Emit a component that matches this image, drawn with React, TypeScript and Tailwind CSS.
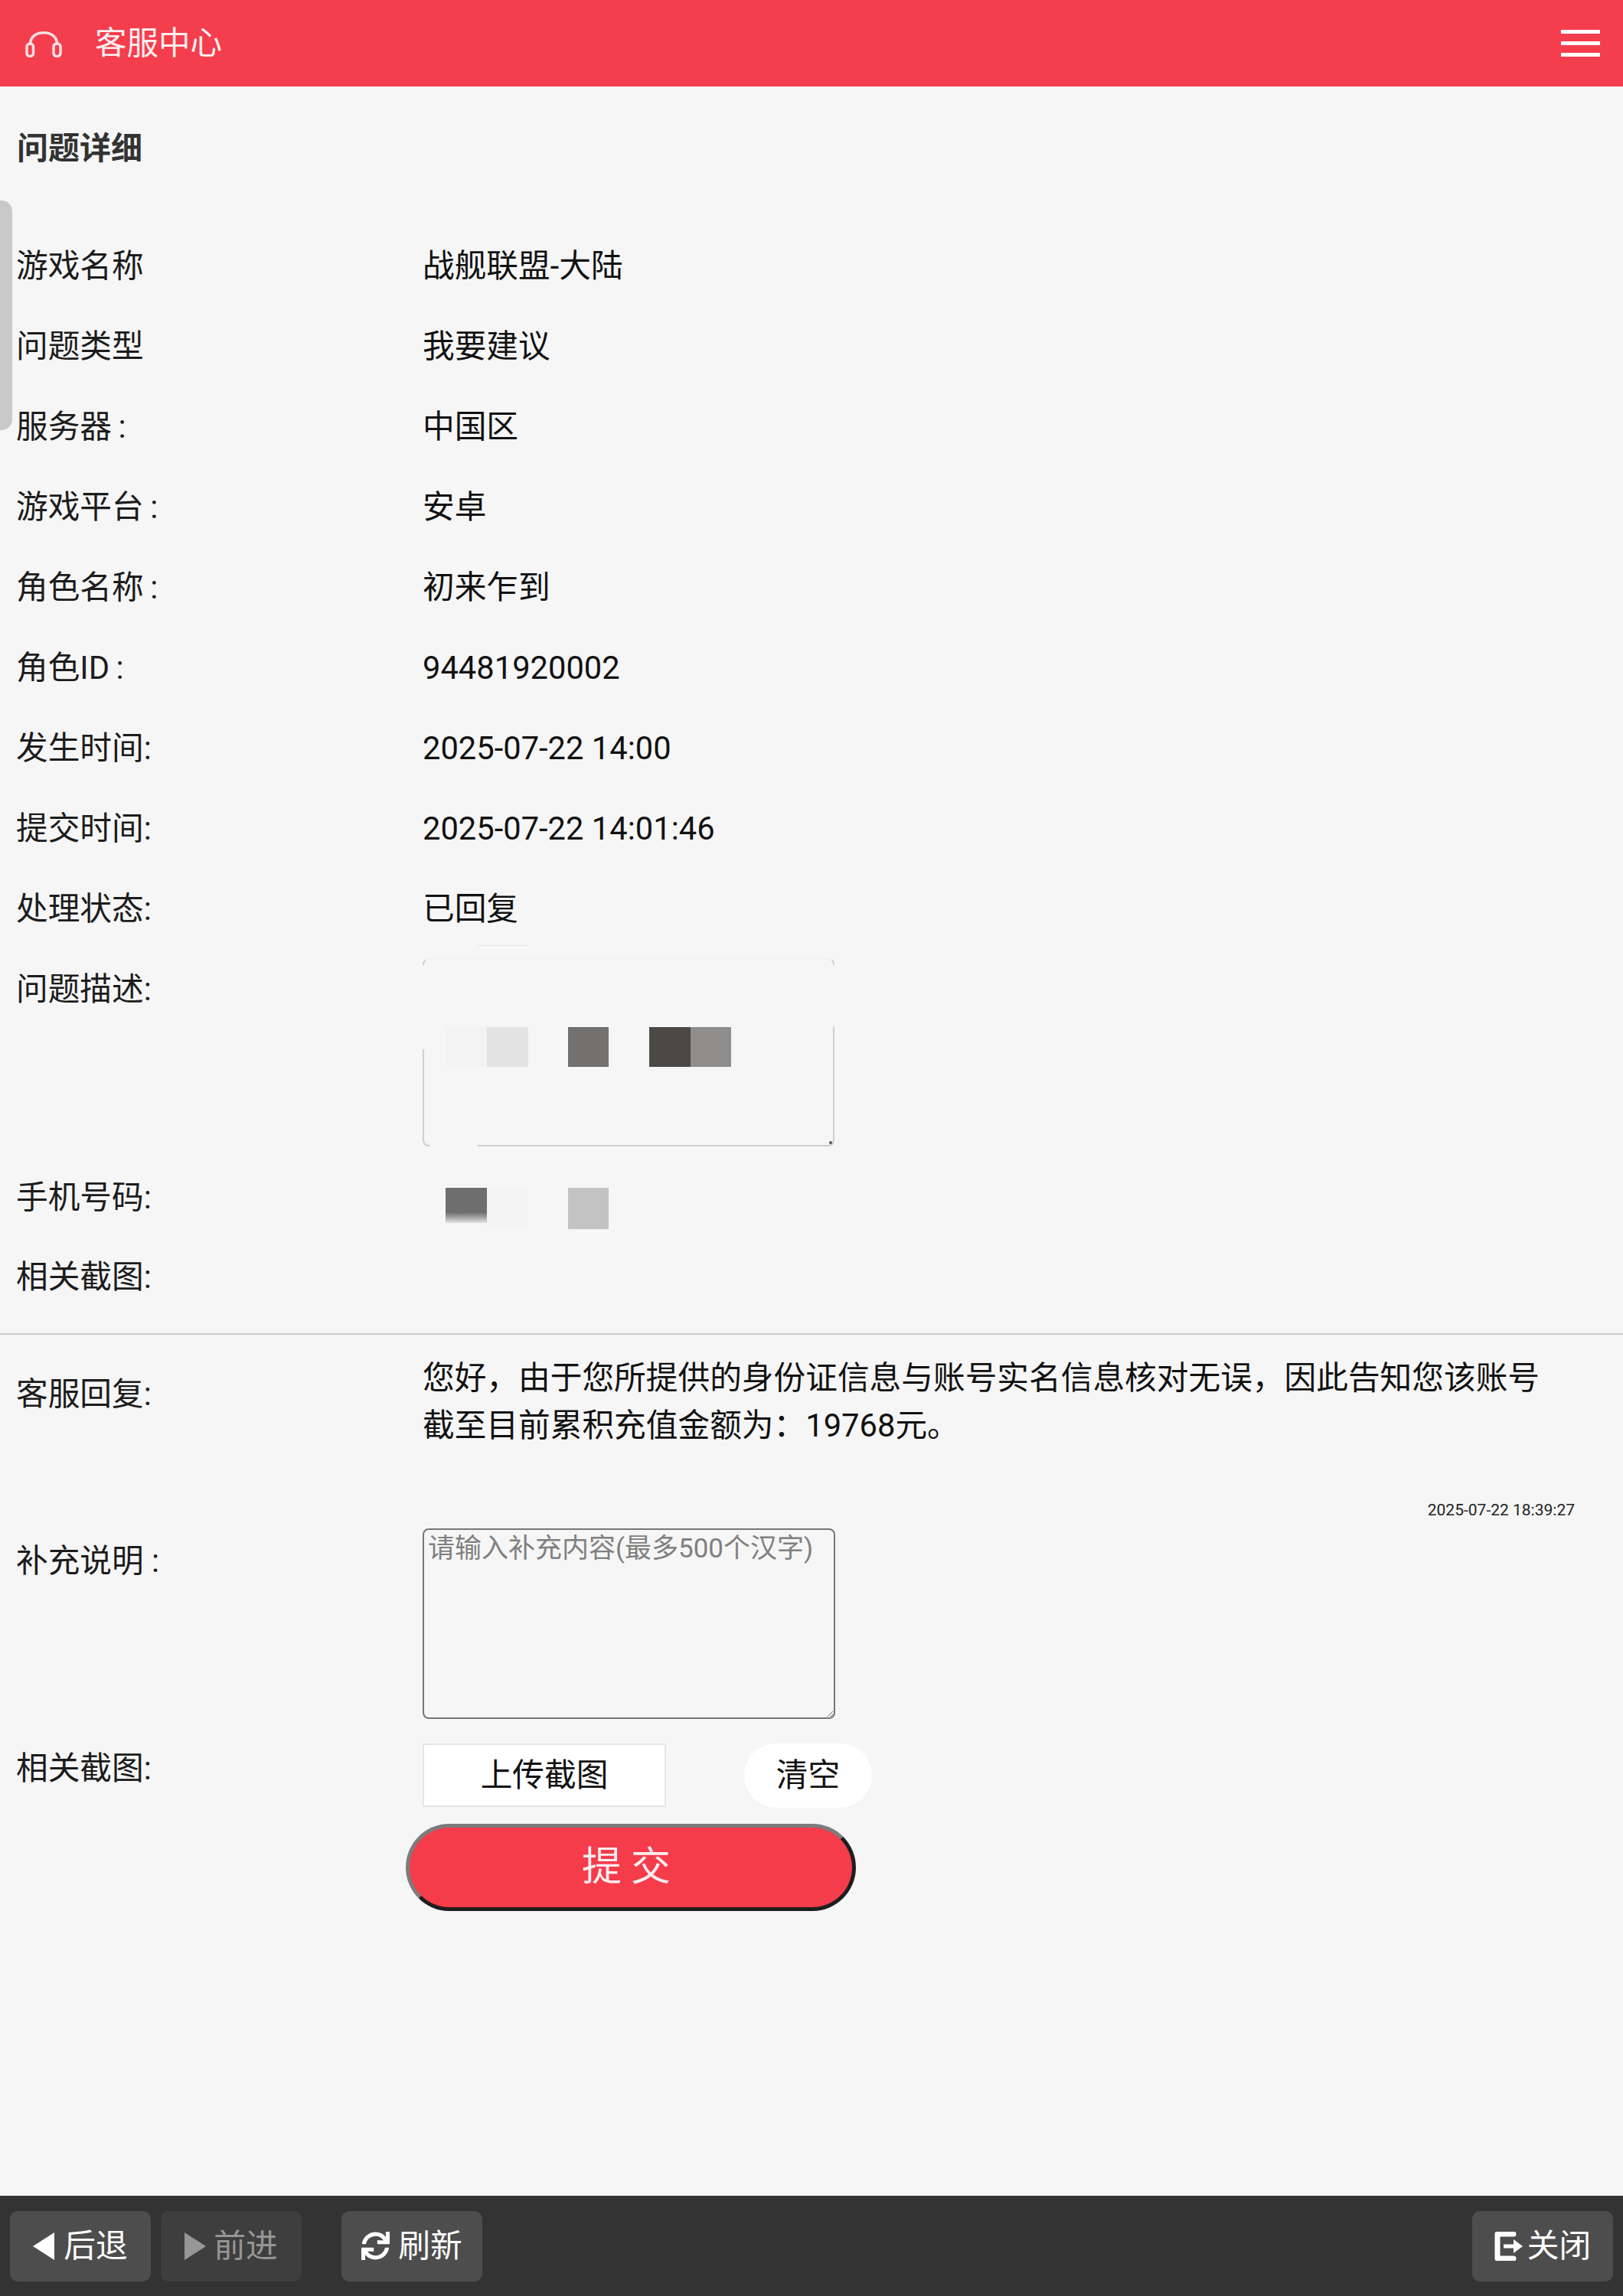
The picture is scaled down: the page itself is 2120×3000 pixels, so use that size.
import { FaSync } from "react-icons/fa";

const rows: [string, string][] = [
  ["游戏名称", "战舰联盟-大陆"],
  ["问题类型", "我要建议"],
  ["服务器\u2009:", "中国区"],
  ["游戏平台\u2009:", "安卓"],
  ["角色名称\u2009:", "初来乍到"],
  ["角色ID\u2009:", "94481920002"],
  ["发生时间:", "2025-07-22 14:00"],
  ["提交时间:", "2025-07-22 14:01:46"],
  ["处理状态:", "已回复"],
];

function Label({ children }: { children: string }) {
  return <div className="pl-[21px] text-[#1c1c1c]">{children}</div>;
}

function Toolbtn({ children, dim }: { children: React.ReactNode; dim?: boolean }) {
  return (
    <div
      className={`flex h-[92px] w-[184px] items-center justify-center rounded-[10px] text-[41.700px] ${
        dim ? "bg-[#3e3e3e] text-[#969696]" : "bg-[#4d4d4d] text-white"
      }`}
    >
      {children}
    </div>
  );
}

export default function App() {
  return (
    <div
      className="relative flex h-[3000px] w-[2120px] flex-col bg-[#f6f6f6] text-[41.700px] leading-none"
      style={{ fontFamily: 'Roboto, "Noto Sans CJK SC", sans-serif' }}
    >
      <header className="flex h-[113px] shrink-0 items-center justify-between bg-[#f43e4d] pl-[33px] pr-[30px] text-white">
        <div className="flex items-center">
          <svg width="48" height="34" viewBox="0 0 48 34" fill="none" stroke="#fbdfe1" strokeWidth="3.500" className="mt-[2px]">
            <path d="M6.500 18 V17 C6.500 7 14 1.800 24 1.800 C34 1.800 41.500 7 41.500 17 V18" />
            <rect x="2" y="16" width="8.500" height="16.500" rx="4" />
            <rect x="37" y="16" width="9" height="16.500" rx="4" />
          </svg>
          <span className="ml-[43px] text-[41.500px] text-[#fdeef0]">客服中心</span>
        </div>
        <div className="flex w-[51px] flex-col gap-[10px]">
          <div className="h-[5px] bg-white" />
          <div className="h-[5px] bg-white" />
          <div className="h-[5px] bg-white" />
        </div>
      </header>

      <div className="absolute left-0 top-[262px] h-[300px] w-[16px] rounded-r-[14px] bg-[#c9c9c9]" />

      <h1 className="h-[181px] pl-[22px] pt-[60px] text-[41px] font-bold leading-[42px] text-[#333333]">问题详细</h1>

      <div className="grid grid-cols-[552px_1fr]">
        {rows.map(([k, v]) => (
          <div key={k} className="col-span-2 grid h-[105px] grid-cols-[552px_1fr] items-center pt-[2px]">
            <Label>{k}</Label>
            <div className="text-[#111111]">{v}</div>
          </div>
        ))}

        <div className="col-span-2 grid h-[272px] grid-cols-[552px_1fr]">
          <div className="pt-[33px]">
            <Label>问题描述:</Label>
          </div>
          <div className="pt-[13px]">
            <div className="relative h-[246px] w-[538px] rounded-[8px] border-x-2 border-b-2 border-t border-x-[#cfcfcf] border-b-[#cfcfcf] border-t-[#efefef] pt-[89px]">
              <div className="absolute -top-[18px] left-[70px] h-[1px] w-[66px] bg-[#e6e6e6]" />
              <div className="absolute -left-[2px] top-[8px] h-[110px] w-[3px] bg-[#f6f6f6]" />
              <div className="absolute -right-[2px] top-[8px] h-[80px] w-[3px] bg-[#f6f6f6]" />
              <div className="absolute -bottom-[2px] left-[8px] h-[3px] w-[62px] bg-[#f6f6f6]" />
              <div className="absolute bottom-[1px] right-[1px] h-[4px] w-[4px] rounded-full bg-[#555555]" />
              <div className="flex pl-[28px]">
                <div className="h-[52px] w-[54px] bg-[#f3f3f3]" />
                <div className="h-[52px] w-[54px] bg-[#e3e3e3]" />
                <div className="ml-[52px] h-[52px] w-[53px] bg-[#72716f]" />
                <div className="ml-[53px] h-[52px] w-[54px] bg-[#4b4846]" />
                <div className="h-[52px] w-[53px] bg-[#8e8d8b]" />
              </div>
            </div>
          </div>
        </div>

        <div className="col-span-2 grid h-[104px] grid-cols-[552px_1fr]">
          <div className="pt-[33px]">
            <Label>手机号码:</Label>
          </div>
          <div className="flex pl-[30px] pt-[41px]">
            <div className="h-[46px] w-[54px] bg-gradient-to-b from-[#6e6e6e] from-70% to-[#e4e4e4]" />
            <div className="h-[52px] w-[54px] bg-[#f3f3f3]" />
            <div className="ml-[52px] h-[54px] w-[53px] bg-[#c3c3c3]" />
          </div>
        </div>

        <div className="col-span-2 flex h-[105px] items-center pt-[2px]">
          <Label>相关截图:</Label>
        </div>
      </div>

      <div className="mt-[22px] h-[2px] bg-[#cccccc]" />

      <div className="grid grid-cols-[552px_1fr]">
        <div className="pt-[57px]">
          <Label>客服回复:</Label>
        </div>
        <div className="w-[1480px] pt-[26px] leading-[62px] text-[#111111]">
          您好，由于您所提供的身份证信息与账号实名信息核对无误，因此告知您该账号截至目前累积充值金额为：19768元。
        </div>
      </div>

      <div className="mt-[67px] pr-[63px] text-right text-[21px] leading-[24px] text-[#222222]">2025-07-22 18:39:27</div>

      <div className="mt-[12px] grid grid-cols-[552px_1fr]">
        <div className="pt-[22px]">
          <Label>补充说明 :</Label>
        </div>
        <textarea
          className="h-[249px] w-[539px] rounded-[8px] border-2 border-[#767676] px-[5px] py-[2px] text-[35px] leading-[45px] placeholder:text-[#808080]"
          placeholder="请输入补充内容(最多500个汉字)"
        />
      </div>

      <div className="mt-[32px] grid grid-cols-[552px_1fr]">
        <div className="pt-[12px]">
          <Label>相关截图:</Label>
        </div>
        <div className="flex gap-[102px]">
          <div className="flex h-[83px] w-[318px] items-center justify-center border-2 border-[#e3e5ec] bg-white pt-[1px] text-[#111111]">
            上传截图
          </div>
          <div className="flex h-[84px] w-[167px] items-center justify-center rounded-full bg-white text-[#111111]">
            清空
          </div>
        </div>
      </div>

      <div className="ml-[530px] mt-[21px] flex h-[114px] w-[588px] items-center justify-center rounded-full border-[5px] border-b-[#1e1e1e] border-l-[#7c7c7c] border-r-[#1e1e1e] border-t-[#7c7c7c] bg-[#f43c4b] text-[52px] tracking-[12px] text-[#fdeef0]">
        提交
      </div>

      <div className="flex-1" />

      <footer className="flex h-[131px] shrink-0 items-center justify-between bg-[#333333] pl-[13px] pr-[13px]">
        <div className="flex">
          <Toolbtn>
            <svg width="28" height="36" viewBox="0 0 28 36" className="mr-[12px]">
              <path d="M28 0 V36 L0 18 Z" fill="white" />
            </svg>
            后退
          </Toolbtn>
          <div className="ml-[13px]">
            <Toolbtn dim>
              <svg width="28" height="36" viewBox="0 0 28 36" className="mr-[10px]">
                <path d="M0 0 V36 L28 18 Z" fill="#969696" />
              </svg>
              前进
            </Toolbtn>
          </div>
          <div className="ml-[52px]">
            <Toolbtn>
              <FaSync size={37} className="mr-[11px]" />
              刷新
            </Toolbtn>
          </div>
        </div>
        <Toolbtn>
          <svg width="38" height="38" viewBox="0 0 38 38" className="mr-[5px]">
            <path d="M4 3 H25 M4 3 V35 M4 35 H25" stroke="white" strokeWidth="7" strokeLinecap="round" strokeLinejoin="round" fill="none" />
            <path d="M12 16.500 H25 V10 L37 19 L25 28 V21.500 H12 Z" fill="white" />
          </svg>
          关闭
        </Toolbtn>
      </footer>
    </div>
  );
}
